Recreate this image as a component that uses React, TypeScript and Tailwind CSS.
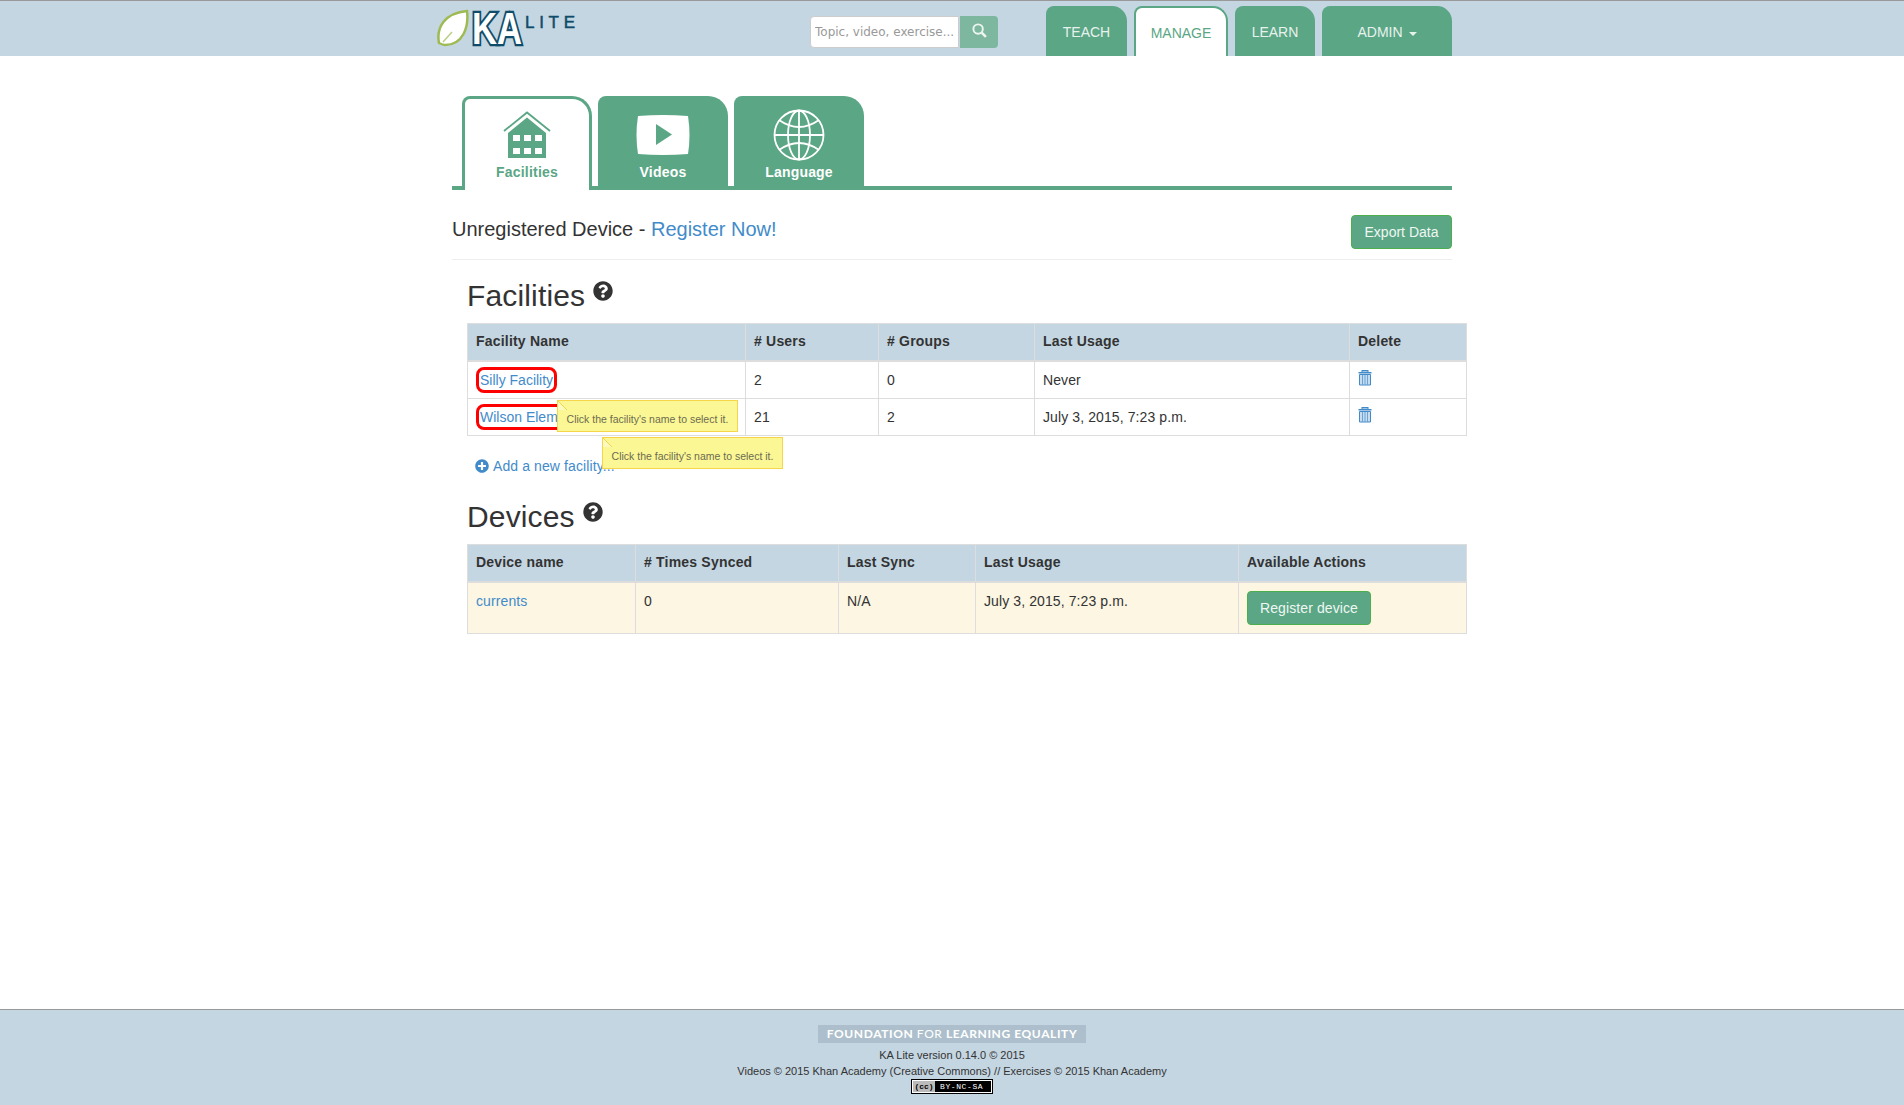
import React from "react";
import { FaQuestionCircle, FaPlusCircle } from "react-icons/fa";

interface navProps {
  label: string;
  width: string;
  active?: boolean;
  caret?: boolean;
}

function NavTab({ label, width, active, caret }: navProps) {
  return (
    <a
      className={
        active
          ? `${width} h-[50px] pt-[3px] flex items-center justify-center gap-[6px] bg-white text-[#5aa685] border-[2px] border-b-0 border-[#5aa685] rounded-tl-[8px] rounded-tr-[15px]`
          : `${width} h-[50px] pt-[3px] flex items-center justify-center gap-[6px] bg-[#5aa685] text-[#e8f2ed] rounded-tl-[8px] rounded-tr-[15px]`
      }
    >
      {label}
      {caret && <span className="w-0 h-0 mt-[2px] border-x-[4px] border-x-transparent border-t-[4px] border-t-[#e8f2ed]" />}
    </a>
  );
}

function Logo() {
  return (
    <svg width="140" height="40" viewBox="0 0 140 40" className="block">
      <path d="M2 34 C-1 18 8 4 30 2 C32 18 26 36 8 36 C6 36 4 35 2 34 Z" fill="#fff" stroke="#9dbb52" strokeWidth="2.5" />
      <path d="M6 33 L15 23" stroke="#b9cf84" strokeWidth="1.5" />
      <text
        x="35"
        y="35"
        fontSize="44"
        fontWeight="700"
        textLength="50"
        lengthAdjust="spacingAndGlyphs"
        fill="#fff"
        stroke="#0f4c69"
        strokeWidth="4.5"
        paintOrder="stroke"
        className="[font-family:'Liberation_Sans',sans-serif]"
      >
        KA
      </text>
      <text
        x="88"
        y="19"
        fontSize="17"
        fontWeight="400"
        textLength="50"
        fill="#0f4c69"
        stroke="#0f4c69"
        strokeWidth="0.5"
        className="[font-family:'Liberation_Sans',sans-serif]"
      >
        LITE
      </text>
    </svg>
  );
}

function HouseIcon() {
  return (
    <svg width="48" height="48" viewBox="0 0 48 48" className="block">
      <polyline points="1,20 24,1.5 47,20" fill="none" stroke="#5aa685" strokeWidth="1.8" />
      <path d="M5 22 L24 6.5 L43 22 V47 H5 Z" fill="#5aa685" />
      {[10, 21, 32].map((x) =>
        [24, 37].map((y) => <rect key={`${x}-${y}`} x={x} y={y} width="7" height="6" fill="#fff" />)
      )}
    </svg>
  );
}

function PlayIcon() {
  return (
    <svg width="54" height="40" viewBox="0 0 54 40" className="block">
      <path d="M2 1 Q27 -1 52 1 Q55 20 52 39 Q27 41 2 39 Q-1 20 2 1 Z" fill="#fff" />
      <polygon points="20,9 36,19.5 20,30" fill="#5aa685" />
    </svg>
  );
}

function GlobeIcon() {
  return (
    <svg width="52" height="52" viewBox="0 0 52 52" className="block" fill="none" stroke="#fff" strokeWidth="1.8">
      <circle cx="26" cy="26" r="24.5" />
      <ellipse cx="26" cy="26" rx="11" ry="24.5" />
      <path d="M26 1.5 V50.5 M1.5 26 H50.5" />
      <path d="M6 11 Q26 25 46 11" />
      <path d="M6 41 Q26 27 46 41" />
    </svg>
  );
}

function TrashIcon() {
  return (
    <svg width="14" height="16" viewBox="0 0 14 16" className="block">
      <rect x="0.5" y="2" width="13" height="1.5" fill="#428bca" />
      <rect x="4" y="0.5" width="6" height="1.5" fill="none" stroke="#428bca" strokeWidth="1" />
      <path d="M1.5 4.5 H12.5 V15 H1.5 Z" fill="#c6dcef" stroke="#428bca" strokeWidth="1" />
      <path d="M4.5 5 V15 M7 5 V15 M9.5 5 V15" stroke="#6ba3d6" strokeWidth="1" />
    </svg>
  );
}

function Tip({ pos }: { pos: string }) {
  return (
    <div
      className={`absolute ${pos} w-[181px] h-[32px] bg-[#fbf795] border border-[#f5d54a] text-[#6b6b50] text-[10.5px] flex items-center justify-center pt-[7px]`}
    >
      <svg width="9" height="9" viewBox="0 0 9 9" className="absolute left-0 top-0">
        <polygon points="0,0 9,9 0,9" fill="#fdfac0" />
        <line x1="0" y1="0" x2="9" y2="9" stroke="#f5d54a" />
      </svg>
      Click the facility's name to select it.
    </div>
  );
}

const thClass = "border border-[#ddd] border-b-2 bg-[#c4d6e2] px-2 pt-[7px] pb-[9px] text-left font-bold leading-[20px] tracking-[0.2px]";
const tdClass = "border border-[#ddd] p-2 align-top leading-[20px] tracking-[0.1px]";

function RedName({ name }: { name: string }) {
  return (
    <a className="inline-block -my-[3px] h-[26px] pl-[1px] pr-[1px] border-[3px] border-[#f00] rounded-[8px] text-[#428bca] leading-[20px] whitespace-nowrap tracking-normal">
      {name}
    </a>
  );
}

export default function App() {
  return (
    <div className="relative min-h-[1105px] flex flex-col bg-white text-[#333] text-[14px] [font-family:'Liberation_Sans',sans-serif]">
      <header className="h-[56px] bg-[#c4d6e2] border-t border-[#999]">
        <div className="w-[1000px] mx-auto flex">
          <div className="-ml-[15px] pt-[8px] w-[373px]">
            <Logo />
          </div>
          <div className="pt-[15px] flex h-[48px]">
            <input
              placeholder="Topic, video, exercise..."
              className="w-[149px] h-[32px] bg-white border border-[#ccc] rounded-l-[4px] px-[4px] text-[12px] [font-family:'DejaVu_Sans',sans-serif] placeholder:text-[#999] outline-none"
            />
            <button className="ml-[1px] w-[38px] h-[32px] pb-[3px] bg-[#7db7a0] rounded-r-[4px] flex items-center justify-center">
              <svg width="15" height="15" viewBox="0 0 14 14" fill="none" stroke="#eef5f1" strokeWidth="1.8">
                <circle cx="5.7" cy="5.7" r="4.4" />
                <path d="M9 9 L13 13" strokeWidth="2.4" />
              </svg>
            </button>
          </div>
          <nav className="ml-[48px] pt-[5px] flex gap-[7px]">
            <NavTab label="TEACH" width="w-[81px]" />
            <NavTab label="MANAGE" width="w-[94px]" active />
            <NavTab label="LEARN" width="w-[80px]" />
            <NavTab label="ADMIN" width="w-[130px]" caret />
          </nav>
        </div>
      </header>

      <main className="flex-1 w-[1000px] mx-auto">
        <div className="mt-[40px] h-[94px] pl-[10px] flex gap-[6px] border-b-[4px] border-[#5aa685]">
          <a className="w-[130px] h-[94px] border-[3px] border-b-0 border-[#5aa685] bg-white rounded-tl-[8px] rounded-tr-[20px] flex flex-col items-center text-[#5aa685] font-bold pt-[12px]">
            <HouseIcon />
            <span className="mt-[3px] tracking-[0.2px]">Facilities</span>
          </a>
          <a className="w-[130px] h-[90px] bg-[#5aa685] rounded-tl-[8px] rounded-tr-[20px] flex flex-col items-center text-white font-bold">
            <span className="h-[66px] flex items-center pt-[11px]">
              <PlayIcon />
            </span>
            <span className="tracking-[0.2px]">Videos</span>
          </a>
          <a className="w-[130px] h-[90px] bg-[#5aa685] rounded-tl-[8px] rounded-tr-[20px] flex flex-col items-center text-white font-bold">
            <span className="h-[66px] flex items-center pt-[11px]">
              <GlobeIcon />
            </span>
            <span className="tracking-[0.2px]">Language</span>
          </a>
        </div>

        <div className="h-[70px] flex items-start justify-between pt-[25px] border-b border-[#eee]">
          <div className="text-[20px] leading-[28px]">
            Unregistered Device - <a className="text-[#428bca]">Register Now!</a>
          </div>
          <button className="w-[101px] h-[34px] bg-[#5aa685] border border-[#4cae4c] rounded-[4px] text-[#f0f7f3] text-[14px]">
            Export Data
          </button>
        </div>

        <div className="ml-[15px] w-[1000px]">
          <div className="h-[63px] flex items-start pt-[18px]">
            <h2 className="text-[30px] leading-[36px] text-[#333] tracking-[0.15px]">Facilities</h2>
            <FaQuestionCircle className="ml-[8px] mt-[3px] text-[#333]" size={20} />
          </div>
          <table className="w-[1000px] table-fixed border-collapse">
            <thead>
              <tr>
                <th className={`${thClass} w-[278px]`}>Facility Name</th>
                <th className={`${thClass} w-[133px]`}># Users</th>
                <th className={`${thClass} w-[156px]`}># Groups</th>
                <th className={`${thClass} w-[315px]`}>Last Usage</th>
                <th className={thClass}>Delete</th>
              </tr>
            </thead>
            <tbody>
              <tr>
                <td className={tdClass}>
                  <RedName name="Silly Facility" />
                </td>
                <td className={tdClass}>2</td>
                <td className={tdClass}>0</td>
                <td className={tdClass}>Never</td>
                <td className={tdClass}>
                  <TrashIcon />
                </td>
              </tr>
              <tr>
                <td className={tdClass}>
                  <RedName name="Wilson Elementary" />
                </td>
                <td className={tdClass}>21</td>
                <td className={tdClass}>2</td>
                <td className={tdClass}>July 3, 2015, 7:23 p.m.</td>
                <td className={tdClass}>
                  <TrashIcon />
                </td>
              </tr>
            </tbody>
          </table>

          <a className="mt-[20px] ml-[8px] flex items-center gap-[4px] h-[20px] text-[#428bca] tracking-[0.1px]">
            <FaPlusCircle size={14} />
            Add a new facility...
          </a>

          <div className="h-[68px] flex items-start pt-[23px]">
            <h2 className="text-[30px] leading-[36px] text-[#333] tracking-[0.15px]">Devices</h2>
            <FaQuestionCircle className="ml-[8px] mt-[3px] text-[#333]" size={20} />
          </div>
          <table className="w-[1000px] table-fixed border-collapse">
            <thead>
              <tr>
                <th className={`${thClass} w-[168px]`}>Device name</th>
                <th className={`${thClass} w-[203px]`}># Times Synced</th>
                <th className={`${thClass} w-[137px]`}>Last Sync</th>
                <th className={`${thClass} w-[263px]`}>Last Usage</th>
                <th className={thClass}>Available Actions</th>
              </tr>
            </thead>
            <tbody>
              <tr className="bg-[#fcf6e3]">
                <td className={tdClass}>
                  <a className="text-[#428bca]">currents</a>
                </td>
                <td className={tdClass}>0</td>
                <td className={tdClass}>N/A</td>
                <td className={tdClass}>July 3, 2015, 7:23 p.m.</td>
                <td className={tdClass}>
                  <button className="block w-[124px] h-[34px] bg-[#5aa685] border border-[#4cae4c] rounded-[4px] text-[#f0f7f3]">
                    Register device
                  </button>
                </td>
              </tr>
            </tbody>
          </table>
        </div>
      </main>

      <Tip pos="left-[557px] top-[400px]" />
      <Tip pos="left-[602px] top-[437px]" />

      <footer className="h-[96px] bg-[#c4d6e2] border-t border-[#999] flex flex-col items-center pt-[15px] text-[11px] leading-[16px] text-[#333]">
        <div className="w-[268px] h-[18px] bg-[#adbfcc] text-white text-[12px] leading-[18px] text-center whitespace-nowrap font-bold tracking-[0.6px] [font-family:Lato,sans-serif]">
          FOUNDATION <span className="font-normal">FOR</span> LEARNING EQUALITY
        </div>
        <div className="mt-[4px]">KA Lite version 0.14.0 © 2015</div>
        <div>Videos © 2015 Khan Academy (Creative Commons) // Exercises © 2015 Khan Academy</div>
        <div className="mt-[1px] w-[80px] h-[13px] bg-black border border-white outline outline-1 outline-black flex items-center text-white text-[8px] leading-[11px] [font-family:'Liberation_Mono',monospace]">
          <span className="w-[22px] h-full bg-[#bbb] text-black font-bold text-center">(cc)</span>
          <span className="pl-[5px] tracking-[0.6px]">BY-NC-SA</span>
        </div>
      </footer>
    </div>
  );
}
